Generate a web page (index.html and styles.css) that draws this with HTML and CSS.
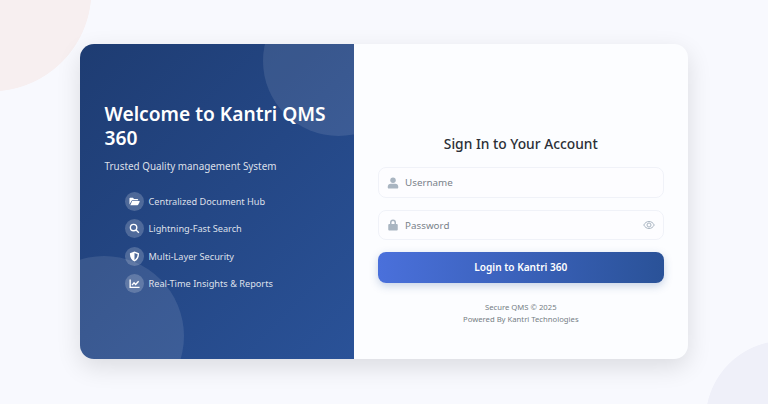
FILE: index.html
```html
<!DOCTYPE html>
<html lang="en">
<head>
    <meta charset="UTF-8">
    <meta name="viewport" content="width=device-width, initial-scale=1.0">
    <title>Kantri QMS 360 Login</title>
    <link rel="stylesheet" href="styles.css">
</head>
<body>
    <div class="card">
        <div class="welcome">
            <div class="welcome-circle welcome-circle-top"></div>
            <div class="welcome-circle welcome-circle-bottom"></div>
            <h1>Welcome to Kantri QMS 360</h1>
            <p class="tagline">Trusted Quality management System</p>
            <ul class="features">
                <li>
                    <span class="feature-icon">
                        <svg viewBox="0 0 24 24"><path d="M1 5.500C1 4.700 1.700 4 2.500 4h6l2.500 2.500h7.500c.8 0 1.500.7 1.500 1.500v1.500H7.500c-1 0-1.800.5-2.200 1.400L1 18.500z"/><path d="M7.500 11H22.300c.8 0 1.300.8 1 1.500l-3.300 6.400c-.3.700-1 1.100-1.700 1.100H2.800l3.600-8.200c.2-.5.600-.8 1.100-.8z"/></svg>
                    </span>
                    Centralized Document Hub
                </li>
                <li>
                    <span class="feature-icon">
                        <svg viewBox="0 0 24 24"><circle class="line" cx="10" cy="10" r="7"/><path class="line" d="M15.500 15.500L21.500 21.500"/></svg>
                    </span>
                    Lightning-Fast Search
                </li>
                <li>
                    <span class="feature-icon">
                        <svg viewBox="0 0 24 24"><path fill-rule="evenodd" d="M12 1l10 4c0 8-2.500 14.500-10 18C4.500 19.500 2 13 2 5zM12 4.500V19.500c4.500-2.500 6.500-7 6.800-12.300z"/></svg>
                    </span>
                    Multi-Layer Security
                </li>
                <li>
                    <span class="feature-icon">
                        <svg viewBox="0 0 24 24"><path class="line" d="M2.500 3.500V20.500H23"/><path class="line" d="M6.500 15.500L11 10.500L14.500 14L21 7"/></svg>
                    </span>
                    Real-Time Insights &amp; Reports
                </li>
            </ul>
        </div>

        <div class="login">
            <h2>Sign In to Your Account</h2>
            <div class="field">
                <svg class="field-icon" viewBox="0 0 24 24"><circle cx="12" cy="6.500" r="5.500"/><path d="M7.500 13.500h9c3.500 0 6 2.500 6 6V21c0 1-.8 2-2 2h-17c-1.200 0-2-1-2-2v-1.500c0-3.500 2.500-6 6-6z"/></svg>
                <span class="placeholder">Username</span>
            </div>
            <div class="field">
                <svg class="field-icon" viewBox="0 0 24 24"><path d="M6 10V7a6 6 0 0 1 12 0v3h-3V7a3 3 0 0 0-6 0v3z"/><rect x="2.500" y="10" width="19" height="13" rx="2"/></svg>
                <span class="placeholder">Password</span>
                <svg class="eye" viewBox="0 0 24 24"><path d="M1.500 12C4 7.500 7.500 5 12 5s8 2.500 10.500 7C20 16.500 16.500 19 12 19S4 16.500 1.500 12z"/><circle cx="12" cy="12" r="4"/></svg>
            </div>
            <a class="login-button">Login to Kantri 360</a>
            <div class="footer">
                <p>Secure QMS © 2025</p>
                <p>Powered By Kantri Technologies</p>
            </div>
        </div>
    </div>
</body>
</html>
```

FILE: styles.css
```css
* {
    box-sizing: border-box;
}

body {
    /* the two soft circles in the page corners */
    background-color: #f8f9fe;
    background-image:
        radial-gradient(circle at -9px -9px, #f7eff0 100px, transparent 100.700px),
        radial-gradient(circle at 785px 420px, #eff0f9 79px, transparent 79.700px);
    font-family: "Noto Sans", "Open Sans", sans-serif;
    display: flex;
    justify-content: center;
    align-items: flex-start;
    height: 100vh;
    margin: 0;
    padding-top: 44px;
    overflow: hidden;
}

.card {
    position: relative;
    display: flex;
    width: 608px;
    height: 315px;
    background-color: #fcfdff;
    border-radius: 14px;
    box-shadow: 0 8px 24px rgba(0, 0, 0, 0.12);
    overflow: hidden;
}

.welcome {
    position: relative;
    width: 45%;
    padding: 57.750px 20px 0 24.500px;
    background: linear-gradient(135deg, #1e3c72, #2a5298);
    color: #fff;
    overflow: hidden;
}

.welcome-circle {
    position: absolute;
    border-radius: 50%;
    background-color: rgba(255, 255, 255, 0.1);
}

.welcome-circle-top {
    top: -58px;
    right: -60px;
    width: 151px;
    height: 150px;
}

.welcome-circle-bottom {
    bottom: -57px;
    left: -56px;
    width: 160px;
    height: 160px;
}

.welcome h1 {
    position: relative;
    margin: 0 0 7.250px;
    font-size: 19.200px;
    line-height: 24.500px;
    font-weight: 600;
}

.tagline {
    position: relative;
    margin: 0 0 13.850px;
    font-size: 9.900px;
    line-height: 16px;
    color: rgba(255, 255, 255, 0.85);
}

.features {
    position: relative;
    list-style: none;
    margin: 0;
    padding: 0 0 0 20px;
}

.features li {
    display: flex;
    align-items: center;
    gap: 5px;
    height: 27.300px;
    font-size: 9.200px;
    color: rgba(255, 255, 255, 0.85);
}

.feature-icon {
    display: flex;
    align-items: center;
    justify-content: center;
    width: 19px;
    height: 19px;
    border-radius: 50%;
    background-color: rgba(255, 255, 255, 0.2);
}

.feature-icon svg {
    width: 11px;
    height: 11px;
    fill: #fff;
}

.feature-icon svg .line {
    fill: none;
    stroke: #fff;
    stroke-width: 3;
}

.login {
    flex: 1;
    padding: 89.250px 24.500px 0;
}

.login h2 {
    margin: 0 0 12px;
    text-align: center;
    font-size: 13.800px;
    line-height: 22px;
    font-weight: 500;
    color: #2b2f36;
}

.field {
    display: flex;
    align-items: center;
    height: 30.500px;
    margin-bottom: 12px;
    padding: 0 8px;
    background-color: #fdfdff;
    border: 1px solid #f0f2f8;
    border-radius: 8px;
    font-size: 9.800px;
}

.field-icon {
    width: 12px;
    height: 12px;
    margin-right: 6px;
    fill: #a9b5c1;
}

.placeholder {
    flex: 1;
    color: #7a828a;
}

.eye {
    width: 12px;
    height: 12px;
    fill: none;
    stroke: #a9b5c1;
    stroke-width: 2;
}

.login-button {
    display: block;
    height: 30.500px;
    line-height: 30.500px;
    margin-bottom: 18px;
    text-align: center;
    color: #fff;
    font-size: 10.100px;
    font-weight: 600;
    background: linear-gradient(90deg, #4a70db, #2a5298);
    border-radius: 8px;
    box-shadow: 0 3px 8px rgba(42, 82, 152, 0.25);
    cursor: pointer;
}

.footer {
    text-align: center;
    font-size: 7.700px;
    line-height: 12.700px;
    color: #767d85;
}

.footer p {
    margin: 0;
}
```
